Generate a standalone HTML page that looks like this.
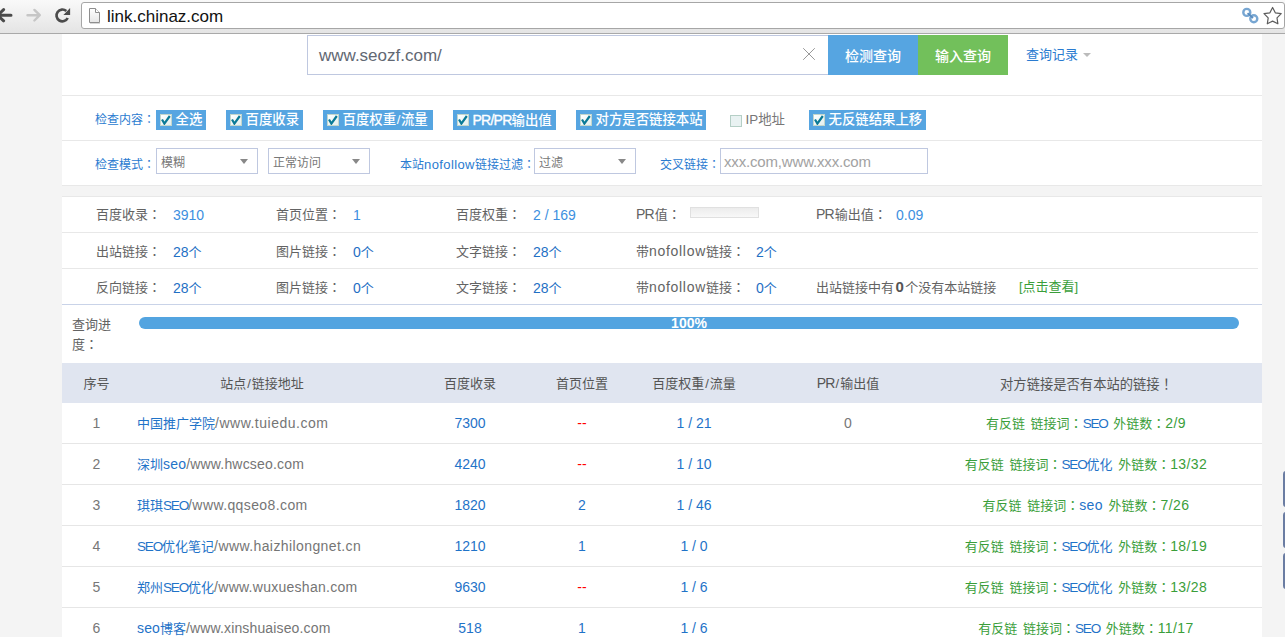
<!DOCTYPE html>
<html lang="zh-CN">
<head>
<meta charset="utf-8">
<title>link.chinaz.com</title>
<style>
*{box-sizing:border-box;margin:0;padding:0}
html,body{width:1285px;height:637px;overflow:hidden}
body{position:relative;background:#f4f4f4;font-family:"Liberation Sans","Noto Sans CJK SC",sans-serif;font-size:13px;color:#555}
.abs{position:absolute;white-space:nowrap}
.k{font-family:"Noto Sans CJK JP","Noto Sans CJK SC",sans-serif}
/* browser chrome */
#bar{position:absolute;left:0;top:0;width:1285px;height:34px;background:linear-gradient(#f9f9f9,#f1f1f1 40%,#e4e4e4);border-bottom:1px solid #a9a9a9}
#addr{position:absolute;left:81px;top:2px;width:1204px;height:27px;background:#fff;border:1px solid #a6a6a6;border-radius:3px}
#url{left:107px;top:4px;line-height:25px;font-size:17px;color:#111;letter-spacing:0}
/* page */
#main{position:absolute;left:62px;top:34px;width:1200px;height:603px;background:#fff}
.hl{position:absolute;left:62px;height:1px;background:#e8e8e8}
.blue{color:#2a7bd0}
.lab{font-size:12px;color:#2a7bd0;line-height:20px}
.cb{position:absolute;top:110px;height:20px;background:#56a5e1;color:#fff;font-size:13px;line-height:20px;white-space:nowrap;padding-left:19.5px;font-weight:500;font-size:13.4px}
.cb i,.cbn i{position:absolute;left:4px;top:4px;width:12px;height:12px;background:linear-gradient(135deg,#fff,#e3efee);border:1px solid #c3d6cc}
.cb i svg{position:absolute;left:0;top:0;width:10px;height:10px}
.sel{position:absolute;top:148px;height:26px;border:1px solid #bfc8e0;background:#fff;font-size:12px;line-height:29px;padding-left:4px;color:#777}
.sel:not(.inp):after{content:"";position:absolute;right:9px;top:9.5px;border:4.5px solid transparent;border-top:5px solid #888;border-bottom:0}
.st{font-size:13px;line-height:36px;color:#636363}
.sv{font-size:14px;line-height:39px;color:#3d8fe0}
.sv2{font-size:14px;line-height:39px;color:#1f6fc4}
.sv2 .zh{font-size:13px}
.th{position:absolute;top:363px;height:40px;line-height:41px;text-align:center;font-size:13px;color:#555;white-space:nowrap}
.r{position:absolute;left:62px;width:1200px;height:41px;border-bottom:1px solid #e6e6e6;line-height:40px;font-size:14px}
.r span{position:absolute;top:0;white-space:nowrap;text-align:center}
.r span span{position:static}
.r em{font-style:normal}
.c1{left:0;width:69px;color:#777}
.c2{left:75px;text-align:left!important;color:#757575;letter-spacing:.5px}
.c2 b{font-weight:normal;color:#1f73c8}
.c2 .zh{font-size:13px;letter-spacing:0}
.c2 .up{font-size:13.5px;letter-spacing:-1.15px}
.c3{left:358px;width:100px;color:#1f73c8}
.c4{left:470px;width:100px;color:#1f73c8}
.c4.red{color:#f00}
.c5{left:582px;width:100px;color:#1f73c8}
.c6{left:736px;width:100px;color:#777}
.c7{left:824px;width:400px;color:#3a9e3a;font-size:13px;word-spacing:2px}
.c7 b{font-weight:normal;color:#1f73c8}
.c7 .up{font-size:13.5px;letter-spacing:-1.15px}
.c7 em{font-size:14px;letter-spacing:.4px}
</style>
</head>
<body>
<div id="main"></div>

<!-- browser toolbar -->
<div id="bar">
  <div id="addr"></div>
  <svg class="abs" style="left:0;top:0" width="110" height="34" viewBox="0 0 110 34">
    <defs><linearGradient id="pg" x1="0" y1="0" x2="0" y2="1"><stop offset="0" stop-color="#fff"/><stop offset="1" stop-color="#e6e6e6"/></linearGradient></defs>
    <!-- back -->
    <path d="M11 15.2 L-2 15.2 M3.6 9.6 L-2.4 15.2 L3.6 20.8" fill="none" stroke="#4b4b4b" stroke-width="3" stroke-linecap="round" stroke-linejoin="round"/>
    <!-- forward -->
    <path d="M27.5 15.2 L39.5 15.2 M34.4 9.9 L39.8 15.2 L34.4 20.5" fill="none" stroke="#c6c6c6" stroke-width="2.4" stroke-linecap="round" stroke-linejoin="round"/>
    <!-- reload -->
    <path d="M66.3 11.0 A5.9 5.9 0 1 0 67.7 18.0" fill="none" stroke="#4b4b4b" stroke-width="2.7"/>
    <path d="M70.1 8 L70.1 15 L63.4 15 Z" fill="#4b4b4b"/>
    <!-- page icon -->
    <path d="M89.5 8.5 L95.5 8.5 L99.5 12.5 L99.5 22.5 L89.5 22.5 Z" fill="url(#pg)" stroke="#8e8e8e" stroke-width="1"/>
    <path d="M95.5 8.5 L95.5 12.5 L99.5 12.5" fill="#fff" stroke="#8e8e8e" stroke-width="1"/>
    <path d="M90 23.5 L100 23.5" stroke="#d8d8d8" stroke-width="1"/>
  </svg>
  <div id="url" class="abs">link.chinaz.com</div>
  <svg class="abs" style="left:1238px;top:4px" width="47" height="24" viewBox="0 0 47 24">
    <circle cx="8.8" cy="8.4" r="3.5" fill="none" stroke="#77a6d2" stroke-width="2.4"/>
    <circle cx="15.8" cy="14.8" r="3.5" fill="none" stroke="#77a6d2" stroke-width="2.4"/>
    <path d="M9.6 9.2 L15 14" stroke="#5a8dc0" stroke-width="1.8"/>
    <path d="M34.6 3.5 L37.3 8.8 L43.2 9.7 L39.0 13.9 L39.9 19.8 L34.6 17.1 L29.3 19.8 L30.2 13.9 L26.0 9.7 L31.9 8.8 Z" fill="#fff" stroke="#5c5c5c" stroke-width="1.2" stroke-linejoin="round"/>
  </svg>
</div>

<!-- search box -->
<div class="abs" style="left:307px;top:35px;width:522px;height:40px;border:1px solid #bfc8e0;background:#fff"></div>
<div class="abs" style="left:319px;top:36px;line-height:40px;font-size:17px;color:#626873;letter-spacing:0">www.seozf.com/</div>
<svg class="abs" style="left:802px;top:47px" width="14" height="14" viewBox="0 0 14 14"><path d="M1.2 1.2 L12.8 12.8 M12.8 1.2 L1.2 12.8" stroke="#999" stroke-width="1"/></svg>
<div class="abs" style="left:828px;top:35px;width:90px;height:40px;background:#56a5e1;color:#fff;font-size:14px;font-weight:500;line-height:42px;text-align:center">检测查询</div>
<div class="abs" style="left:918px;top:35px;width:90px;height:40px;background:#72c05b;color:#fff;font-size:14px;font-weight:500;line-height:42px;text-align:center">输入查询</div>
<div class="abs" style="left:1026px;top:35px;line-height:40px;font-size:13px;color:#2a7bd0">查询记录</div>
<div class="abs" style="left:1083px;top:53px;border:4px solid transparent;border-top:4px solid #bbb;border-bottom:0"></div>

<div class="hl" style="top:95px;width:1200px"></div>

<!-- check content -->
<div class="abs lab" style="left:95px;top:109px">检查内容<span class="k" lang="ja">：</span></div>
<div class="cb" style="left:156px;width:50px"><i><svg viewBox="0 0 10 10"><path d="M1 4.5 L3.4 8.6 L8.8 1" stroke="#0a7a96" stroke-width="2.2" fill="none"/></svg></i>全选</div>
<div class="cb" style="left:226px;width:77px"><i><svg viewBox="0 0 10 10"><path d="M1 4.5 L3.4 8.6 L8.8 1" stroke="#0a7a96" stroke-width="2.2" fill="none"/></svg></i>百度收录</div>
<div class="cb" style="left:323px;width:110px"><i><svg viewBox="0 0 10 10"><path d="M1 4.5 L3.4 8.6 L8.8 1" stroke="#0a7a96" stroke-width="2.2" fill="none"/></svg></i>百度权重<span style="padding:0 .6px">/</span>流量</div>
<div class="cb" style="left:453px;width:103px"><i><svg viewBox="0 0 10 10"><path d="M1 4.5 L3.4 8.6 L8.8 1" stroke="#0a7a96" stroke-width="2.2" fill="none"/></svg></i><span style="letter-spacing:-.75px;font-size:14px;-webkit-text-stroke:.35px #fff">PR/PR</span>输出值</div>
<div class="cb" style="left:576px;width:130px"><i><svg viewBox="0 0 10 10"><path d="M1 4.5 L3.4 8.6 L8.8 1" stroke="#0a7a96" stroke-width="2.2" fill="none"/></svg></i>对方是否链接本站</div>
<div class="cb cbn" style="left:726px;width:60px;background:none;color:#777;font-weight:400"><i style="background:#e9f2f2;border-color:#b5cfc6;top:5px"></i>IP地址</div>
<div class="cb" style="left:809px;width:117px"><i><svg viewBox="0 0 10 10"><path d="M1 4.5 L3.4 8.6 L8.8 1" stroke="#0a7a96" stroke-width="2.2" fill="none"/></svg></i>无反链结果上移</div>

<div class="hl" style="top:140px;width:1200px"></div>

<!-- check mode -->
<div class="abs lab" style="left:95px;top:154px">检查模式<span class="k" lang="ja">：</span></div>
<div class="sel" style="left:156px;width:102px">模糊</div>
<div class="sel" style="left:268px;width:102px">正常访问</div>
<div class="abs lab" style="left:400px;top:154px">本站<span style="font-size:13px;letter-spacing:.4px">nofollow</span>链接过滤<span class="k" lang="ja">：</span></div>
<div class="sel" style="left:534px;width:102px">过滤</div>
<div class="abs lab" style="left:660px;top:154px">交叉链接<span class="k" lang="ja">：</span></div>
<div class="sel inp" style="left:720px;width:208px;font-size:15px;color:#a2a2a2;padding-left:3px;letter-spacing:-.17px;line-height:25px">xxx.com,www.xxx.com</div>

<div class="hl" style="top:185px;width:1200px"></div>
<div class="abs" style="left:62px;top:186px;width:1200px;height:10px;background:#f4f4f4"></div>
<div class="hl" style="top:196px;width:1200px"></div>

<!-- stats -->
<div class="abs st" style="left:96px;top:196px">百度收录<span class="k" lang="ja">：</span></div><div class="abs sv" style="left:173px;top:196px">3910</div>
<div class="abs st" style="left:276px;top:196px">首页位置<span class="k" lang="ja">：</span></div><div class="abs sv" style="left:353px;top:196px">1</div>
<div class="abs st" style="left:456px;top:196px">百度权重<span class="k" lang="ja">：</span></div><div class="abs sv" style="left:533px;top:196px">2 / 169</div>
<div class="abs st" style="left:636px;top:196px"><span style="font-size:14px;letter-spacing:-.9px">PR</span><span style="padding-left:1px">值</span><span class="k" lang="ja">：</span></div>
<div class="abs" style="left:690px;top:207px;width:69px;height:11px;border:1px solid #e0e0e0;background:linear-gradient(#ececec,#f8f8f8)"></div>
<div class="abs st" style="left:816px;top:196px"><span style="font-size:14px;letter-spacing:-.9px">PR</span><span style="padding-left:1px">输</span>出值<span class="k" lang="ja">：</span></div><div class="abs sv" style="left:896px;top:196px">0.09</div>
<div class="hl" style="top:232px;width:1196px"></div>

<div class="abs st" style="left:96px;top:233px">出站链接<span class="k" lang="ja">：</span></div><div class="abs sv2" style="left:173px;top:233px">28<span class="zh">个</span></div>
<div class="abs st" style="left:276px;top:233px">图片链接<span class="k" lang="ja">：</span></div><div class="abs sv2" style="left:353px;top:233px">0<span class="zh">个</span></div>
<div class="abs st" style="left:456px;top:233px">文字链接<span class="k" lang="ja">：</span></div><div class="abs sv2" style="left:533px;top:233px">28<span class="zh">个</span></div>
<div class="abs st" style="left:636px;top:233px">带<span style="font-size:14px;letter-spacing:.7px">nofollow</span>链接<span class="k" lang="ja">：</span></div><div class="abs sv2" style="left:756px;top:233px">2<span class="zh">个</span></div>
<div class="hl" style="top:268px;width:1196px"></div>

<div class="abs st" style="left:96px;top:269px">反向链接<span class="k" lang="ja">：</span></div><div class="abs sv2" style="left:173px;top:269px">28<span class="zh">个</span></div>
<div class="abs st" style="left:276px;top:269px">图片链接<span class="k" lang="ja">：</span></div><div class="abs sv2" style="left:353px;top:269px">0<span class="zh">个</span></div>
<div class="abs st" style="left:456px;top:269px">文字链接<span class="k" lang="ja">：</span></div><div class="abs sv2" style="left:533px;top:269px">28<span class="zh">个</span></div>
<div class="abs st" style="left:636px;top:269px">带<span style="font-size:14px;letter-spacing:.7px">nofollow</span>链接<span class="k" lang="ja">：</span></div><div class="abs sv2" style="left:756px;top:269px">0<span class="zh">个</span></div>
<div class="abs st" style="left:816px;top:269px">出站链接中有<b style="font-size:15px;padding:0 1.4px 0 1.6px;color:#555">0</b>个没有本站链接</div>
<div class="abs st" style="left:1019px;top:269px;color:#3a9e3a">[点击查看]</div>
<div class="hl" style="top:304px;width:1200px;background:#c9d3e8"></div>

<!-- progress -->
<div class="abs" style="left:72px;top:315px;font-size:13px;line-height:19px;color:#636363;white-space:normal;width:40px">查询进度<span class="k" lang="ja">：</span></div>
<div class="abs" style="left:139px;top:317px;width:1100px;height:12px;border-radius:6px;background:#53a4e0;color:#fff;font-weight:bold;font-size:14px;line-height:12.5px;text-align:center">100%</div>

<!-- table header -->
<div class="abs" style="left:62px;top:363px;width:1200px;height:40px;background:#e0e5f0"></div>
<div class="th" style="left:62px;width:69px">序号</div>
<div class="th" style="left:162px;width:200px">站点<span style="padding:0 1px">/</span>链接地址</div>
<div class="th" style="left:420px;width:100px">百度收录</div>
<div class="th" style="left:532px;width:100px">首页位置</div>
<div class="th" style="left:644px;width:100px">百度权重<span style="padding:0 1px">/</span>流量</div>
<div class="th" style="left:798px;width:100px"><span style="font-size:14px;letter-spacing:-.9px">PR</span><span style="padding:0 1px">/</span>输出值</div>
<div class="th" style="left:886.5px;width:400px;font-size:13.3px">对方链接是否有本站的链接<span class="k" lang="ja">！</span></div>

<!-- rows -->
<div class="r" style="top:403px"><span class="c1">1</span><span class="c2" style="letter-spacing:0.5px"><b><span class="zh">中国推广学院</span></b>/www.tuiedu.com</span><span class="c3">7300</span><span class="c4 red">--</span><span class="c5">1 / 21</span><span class="c6">0</span><span class="c7">有反链 链接词<span class="k" lang="ja">：</span><b><span class="up">SEO</span></b> 外链数<span class="k" lang="ja">：</span><em>2/9</em></span></div>
<div class="r" style="top:444px"><span class="c1">2</span><span class="c2" style="letter-spacing:0.18px"><b><span class="zh">深圳</span>seo</b>/www.hwcseo.com</span><span class="c3">4240</span><span class="c4 red">--</span><span class="c5">1 / 10</span><span class="c6"></span><span class="c7">有反链 链接词<span class="k" lang="ja">：</span><b><span class="up">SEO</span>优化</b> 外链数<span class="k" lang="ja">：</span><em>13/32</em></span></div>
<div class="r" style="top:485px"><span class="c1">3</span><span class="c2" style="letter-spacing:0.4px"><b><span class="zh">琪琪</span><span class="up">SEO</span></b>/www.qqseo8.com</span><span class="c3">1820</span><span class="c4">2</span><span class="c5">1 / 46</span><span class="c6"></span><span class="c7">有反链 链接词<span class="k" lang="ja">：</span><b><em>seo</em></b> 外链数<span class="k" lang="ja">：</span><em>7/26</em></span></div>
<div class="r" style="top:526px"><span class="c1">4</span><span class="c2" style="letter-spacing:0.41px"><b><span class="up">SEO</span><span class="zh">优化笔记</span></b>/www.haizhilongnet.cn</span><span class="c3">1210</span><span class="c4">1</span><span class="c5">1 / 0</span><span class="c6"></span><span class="c7">有反链 链接词<span class="k" lang="ja">：</span><b><span class="up">SEO</span>优化</b> 外链数<span class="k" lang="ja">：</span><em>18/19</em></span></div>
<div class="r" style="top:567px"><span class="c1">5</span><span class="c2" style="letter-spacing:0.27px"><b><span class="zh">郑州</span><span class="up">SEO</span><span class="zh">优化</span></b>/www.wuxueshan.com</span><span class="c3">9630</span><span class="c4 red">--</span><span class="c5">1 / 6</span><span class="c6"></span><span class="c7">有反链 链接词<span class="k" lang="ja">：</span><b><span class="up">SEO</span>优化</b> 外链数<span class="k" lang="ja">：</span><em>13/28</em></span></div>
<div class="r" style="top:608px"><span class="c1">6</span><span class="c2" style="letter-spacing:0.14px"><b>seo<span class="zh">博客</span></b>/www.xinshuaiseo.com</span><span class="c3">518</span><span class="c4">1</span><span class="c5">1 / 6</span><span class="c6"></span><span class="c7">有反链 链接词<span class="k" lang="ja">：</span><b><span class="up">SEO</span></b> 外链数<span class="k" lang="ja">：</span><em>11/17</em></span></div>

<!-- right floating tabs -->
<div class="abs" style="left:1282.5px;top:471px;width:6px;height:36px;background:#6b7da3;border-radius:3px"></div>
<div class="abs" style="left:1282.5px;top:512px;width:6px;height:36px;background:#6b7da3;border-radius:3px"></div>
<div class="abs" style="left:1282.5px;top:553px;width:6px;height:36px;background:#6b7da3;border-radius:3px"></div>
</body>
</html>
